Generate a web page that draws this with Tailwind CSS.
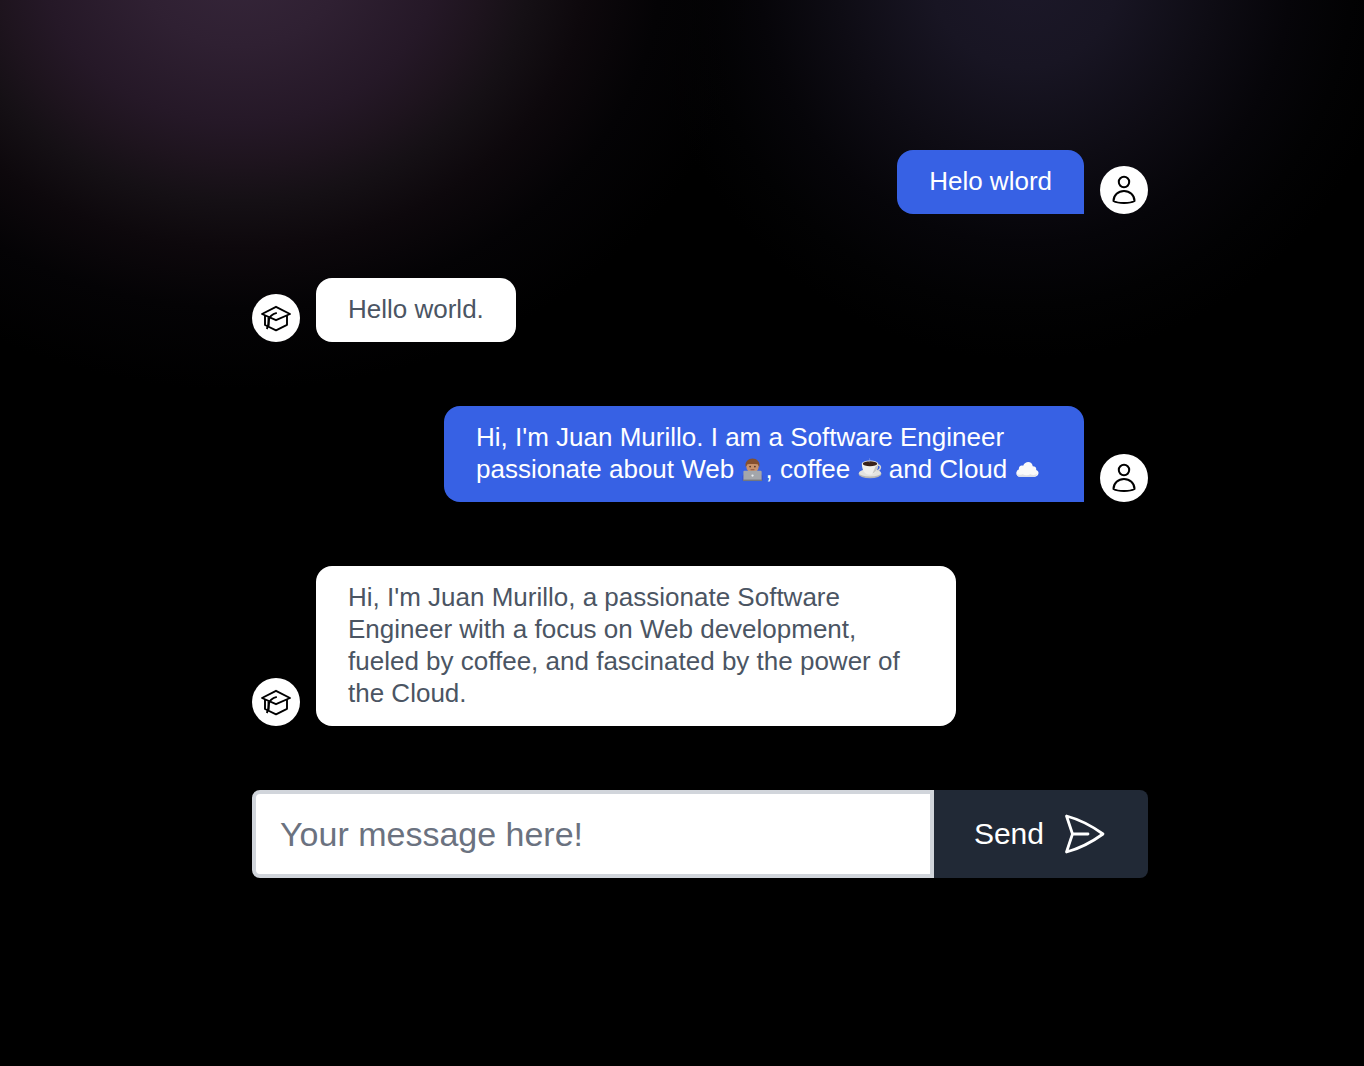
<!DOCTYPE html>
<html lang="en">
<head>
<meta charset="utf-8">
<meta name="viewport" content="width=device-width, initial-scale=1">
<title>Chat</title>
<script src="https://cdn.jsdelivr.net/npm/@tailwindcss/browser@4"></script>
</head>
<body class="min-h-screen bg-black bg-[radial-gradient(ellipse_520px_430px_at_240px_-40px,#36263a_0%,#2f2032_20%,#251827_38%,#1e141e_47%,#151015_56%,#0d080c_67%,#040305_81%,transparent_100%),radial-gradient(ellipse_380px_390px_at_1025px_-30px,#1c1829_0%,#181523_25%,#0e0c14_50%,#060509_70%,#020203_86%,transparent_100%)] bg-no-repeat font-['Liberation_Sans',Arial,sans-serif]">
<svg class="hidden" aria-hidden="true">
  <symbol id="user" viewBox="0 0 32 32" fill="none" stroke="currentColor" stroke-width="2" stroke-linejoin="round">
    <circle cx="16" cy="8" r="5.2"/>
    <path d="M5.500 27C5.500 21 10.300 16.900 16 16.900S26.500 21 26.500 27C24 28.500 20 29 16 29S8 28.500 5.500 27Z"/>
  </symbol>
  <symbol id="cap" viewBox="0 0 32 32" fill="none" stroke="currentColor" stroke-width="1.900" stroke-linejoin="round">
    <path d="M2 12 16 4.800 30 12 16 18.200Z"/>
    <path d="M16.800 10.800C12.500 12 9.500 14 9 17.500C9 21 8.500 23.500 6.800 27"/>
    <path d="M5 13.500V23L16 28.300 27 22.800V13.500M8.500 15.500V24"/>
  </symbol>
</svg>
<main class="pt-[150px] pl-9 pb-10">
  <div class="mx-auto max-w-4xl">
    <section aria-label="Conversation" class="flex flex-col gap-16 text-[26px] leading-8">
      <article class="flex items-end justify-end gap-4">
        <p class="max-w-[640px] rounded-2xl rounded-br-none bg-[#3761e4] px-8 pt-[15px] pb-[17px] text-white">Helo wlord</p>
        <span class="grid size-12 shrink-0 place-items-center rounded-full bg-white text-black"><svg class="size-8" role="img" aria-label="User"><use href="#user"/></svg></span>
      </article>
      <article class="flex items-end gap-4">
        <span class="grid size-12 shrink-0 place-items-center rounded-full bg-white text-black"><svg class="size-8" role="img" aria-label="Assistant"><use href="#cap"/></svg></span>
        <p class="max-w-[640px] rounded-2xl bg-white px-8 pt-[15px] pb-[17px] text-[#4b5563]">Hello world.</p>
      </article>
      <article class="flex items-end justify-end gap-4">
        <p class="max-w-[640px] rounded-2xl rounded-br-none bg-[#3761e4] px-8 pt-[15px] pb-[17px] text-white">Hi, I'm Juan Murillo. I am a Software Engineer passionate about Web <svg class="inline-block size-6 align-[-4px]" viewBox="0 0 25 24" role="img" aria-label="Man technologist">
            <path d="M1.500 23v-4c0-3 4-4 10.500-4S22.500 16 22.500 19v4Z" fill="#394fc4"/>
            <path d="M9 12h6v5H9Z" fill="#b98059"/>
            <ellipse cx="12" cy="8" rx="6.500" ry="7" fill="#c9926b"/>
            <path d="M5 9C3.500 3 8 0 12 0S20.500 3 19 9L17.300 6C14 5.500 10 5.500 6.800 6Z" fill="#86502f"/>
            <circle cx="9.500" cy="8.500" r=".8" fill="#42291c"/><circle cx="14.500" cy="8.500" r=".8" fill="#42291c"/>
            <path d="M10 11.800h4" stroke="#8d4f3c" stroke-width="1"/>
            <rect x="2.500" y="12.800" width="19" height="10" rx="1" fill="#a3a6ab"/>
            <path d="M2 22h20v1.500h-20Z" fill="#74777e"/>
            <circle cx="12" cy="17.800" r="1.200" fill="#e8edf0"/>
          </svg>, coffee <svg class="inline-block size-6 align-[-4px]" viewBox="0 0 25 24" role="img" aria-label="Coffee">
            <ellipse cx="12.500" cy="16" rx="12" ry="4.500" fill="#b8b8b5"/>
            <ellipse cx="12.500" cy="15" rx="11.500" ry="3.800" fill="#e3e3df"/>
            <path d="M20 7c5-1 4.500 6-2 6" fill="none" stroke="#d8d8d4" stroke-width="1.600"/>
            <path d="M4 5.500C4 12 7 17 12.500 17S21 12 21 5.500Z" fill="#f0f0ed"/>
            <path d="M15 16C19 14 21 10 21 5.500L18 9Z" fill="#c9c9c5"/>
            <ellipse cx="12.500" cy="5.500" rx="8.500" ry="3.300" fill="#eeeeea"/>
            <ellipse cx="12.500" cy="5.500" rx="7.500" ry="2.500" fill="#372019"/>
            <path d="M12 4c-2-2 1-2 0-4" fill="none" stroke="#a9b7df" stroke-width="1" opacity=".6"/>
          </svg> and Cloud <svg class="inline-block size-6 align-[-4px]" viewBox="0 0 25 24" role="img" aria-label="Cloud">
            <path d="M5 19C1 19-.2 13 4 11.500c-.3-3.500 2-5 4.500-4C10.500 2 18 2.500 18.500 8 21.500 8 22.500 10 22 12c4 1 3 7-1.500 7Z" fill="#fafafa"/>
            <path d="M1.500 16C3 17.500 6 17.200 8 16.500c3 1.500 6 1 8 0 2.500 1 5 .7 7-.7C22.500 18 21.500 19 20 19H5c-2 0-3-1-3.500-3Z" fill="#e0e2e7"/>
          </svg></p>
        <span class="grid size-12 shrink-0 place-items-center rounded-full bg-white text-black"><svg class="size-8" role="img" aria-label="User"><use href="#user"/></svg></span>
      </article>
      <article class="flex items-end gap-4">
        <span class="grid size-12 shrink-0 place-items-center rounded-full bg-white text-black"><svg class="size-8" role="img" aria-label="Assistant"><use href="#cap"/></svg></span>
        <p class="max-w-[640px] rounded-2xl bg-white px-8 pt-[15px] pb-[17px] text-[#4b5563]">Hi, I'm Juan Murillo, a passionate Software Engineer with a focus on Web development, fueled by coffee, and fascinated by the power of the Cloud.</p>
      </article>
    </section>
    <form class="mt-16 flex h-[88px]">
      <input id="message" type="text" aria-label="Message" placeholder="Your message here!" class="min-w-0 flex-1 rounded-l-lg border-4 border-[#d1d5db] bg-white px-6 text-[34px] text-gray-800 outline-none placeholder:text-[#6b7280]">
      <button type="button" class="flex items-center gap-5 rounded-r-lg bg-[#212936] px-10 text-[30px] text-white"><span class="pb-0.5">Send</span>
        <svg class="size-11" viewBox="0 0 44 44" fill="none" stroke="currentColor" stroke-width="2.800" stroke-linejoin="round" stroke-linecap="round" aria-hidden="true"><path d="M8.500 22 2.500 4C15.500 7.500 28 14 39 22 28 30 15.500 36.500 2.500 40L8.500 22ZM8.500 22H24"/></svg>
      </button>
    </form>
  </div>
</main>
</body>
</html>
